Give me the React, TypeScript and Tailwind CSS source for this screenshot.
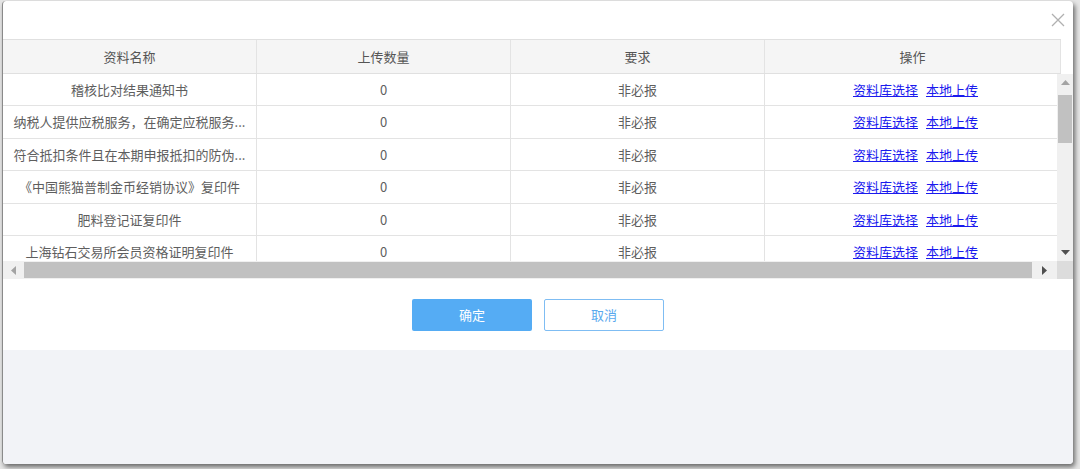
import React from 'react';

const rows = [
  '稽核比对结果通知书',
  '纳税人提供应税服务，在确定应税服务...',
  '符合抵扣条件且在本期申报抵扣的防伪...',
  '《中国熊猫普制金币经销协议》复印件',
  '肥料登记证复印件',
  '上海钻石交易所会员资格证明复印件',
];

const font = { fontFamily: '"Noto Sans CJK SC", "Noto Sans", sans-serif' };

const Cell: React.FC<{ w: string; last?: boolean; children: React.ReactNode }> = ({ w, last, children }) => (
  <div
    className={`${w} shrink-0 h-full flex items-center justify-center px-[4px] whitespace-nowrap ${
      last ? '' : 'border-r border-[#e3e3e3]'
    }`}
  >
    {children}
  </div>
);

export default function App() {
  return (
    <div className="w-[1080px] h-[469px] bg-[#e6e6e6] overflow-hidden" style={font}>
      <div className="ml-[2px] mt-[1px] w-[1071px] h-[463px] bg-white rounded-[4px] flex flex-col overflow-hidden shadow-[2px_3px_5px_rgba(0,0,0,0.55)] border-l border-[#8a8a8a]">
        {/* Title bar */}
        <div className="h-[38px] shrink-0 flex justify-end items-start pr-[8px] pt-[12px]">
          <svg width="14" height="14" viewBox="0 0 14 14" className="text-[#b0b0b0]">
            <path d="M1 1L13 13M13 1L1 13" stroke="currentColor" strokeWidth="1.3" fill="none" />
          </svg>
        </div>

        {/* Header */}
        <div className="h-[35px] shrink-0 flex text-[13px] text-[#555]">
          <div className="w-[1058px] flex bg-[#f5f5f5] border-y border-[#e0e0e0]">
            <Cell w="w-[254px]">资料名称</Cell>
            <Cell w="w-[254px]">上传数量</Cell>
            <Cell w="w-[254px]">要求</Cell>
            <Cell w="w-[296px]">操作</Cell>
          </div>
        </div>

        {/* Body + vertical scrollbar */}
        <div className="h-[187px] shrink-0 flex">
          <div className="w-[1055px] overflow-hidden text-[13px] text-[#5e5e5e]">
            {rows.map((name, i) => (
              <div key={i} className="h-[32.4px] flex border-b border-[#e3e3e3]">
                <Cell w="w-[254px]">{name}</Cell>
                <Cell w="w-[254px]">0</Cell>
                <Cell w="w-[254px]">非必报</Cell>
                <Cell w="w-[293px]" last>
                  <div className="flex gap-[8px] pl-[8px] text-[#1a1aee] underline">
                    <span>资料库选择</span>
                    <span>本地上传</span>
                  </div>
                </Cell>
              </div>
            ))}
          </div>
          <div className="w-[16px] bg-[#f0f0f0] flex flex-col items-center">
            <div className="h-[17px] flex items-center justify-center">
              <svg width="9" height="5" viewBox="0 0 9 5">
                <path d="M0 5L4.5 0L9 5Z" fill="#a3a3a3" />
              </svg>
            </div>
            <div className="mt-[4px] w-[14px] h-[48px] bg-[#c1c1c1]" />
            <div className="flex-1" />
            <div className="h-[17px] flex items-center justify-center">
              <svg width="9" height="5" viewBox="0 0 9 5">
                <path d="M0 0L9 0L4.5 5Z" fill="#505050" />
              </svg>
            </div>
          </div>
        </div>

        {/* Horizontal scrollbar */}
        <div className="h-[18px] shrink-0 flex">
          <div className="w-[1055px] bg-[#f0f0f0] flex items-center">
            <div className="w-[21px] flex items-center justify-center">
              <svg width="5" height="9" viewBox="0 0 5 9">
                <path d="M5 0L5 9L0 4.5Z" fill="#a3a3a3" />
              </svg>
            </div>
            <div className="w-[1008px] h-[16px] bg-[#c1c1c1]" />
            <div className="flex-1 flex items-center justify-center">
              <svg width="5" height="9" viewBox="0 0 5 9">
                <path d="M0 0L5 4.5L0 9Z" fill="#505050" />
              </svg>
            </div>
          </div>
          <div className="w-[16px] bg-[#dcdcdc]" />
        </div>

        {/* Buttons */}
        <div className="h-[71px] shrink-0 flex justify-center items-start pt-[20px] gap-[12px] text-[13px]">
          <button className="w-[120px] h-[32px] bg-[#55acf4] text-white rounded-[2px]">确定</button>
          <button className="w-[120px] h-[32px] bg-white border border-[#7fbdf3] text-[#5aa9ee] rounded-[2px]">
            取消
          </button>
        </div>

        {/* Footer */}
        <div className="flex-1 bg-[#f2f3f7]" />
      </div>
    </div>
  );
}
